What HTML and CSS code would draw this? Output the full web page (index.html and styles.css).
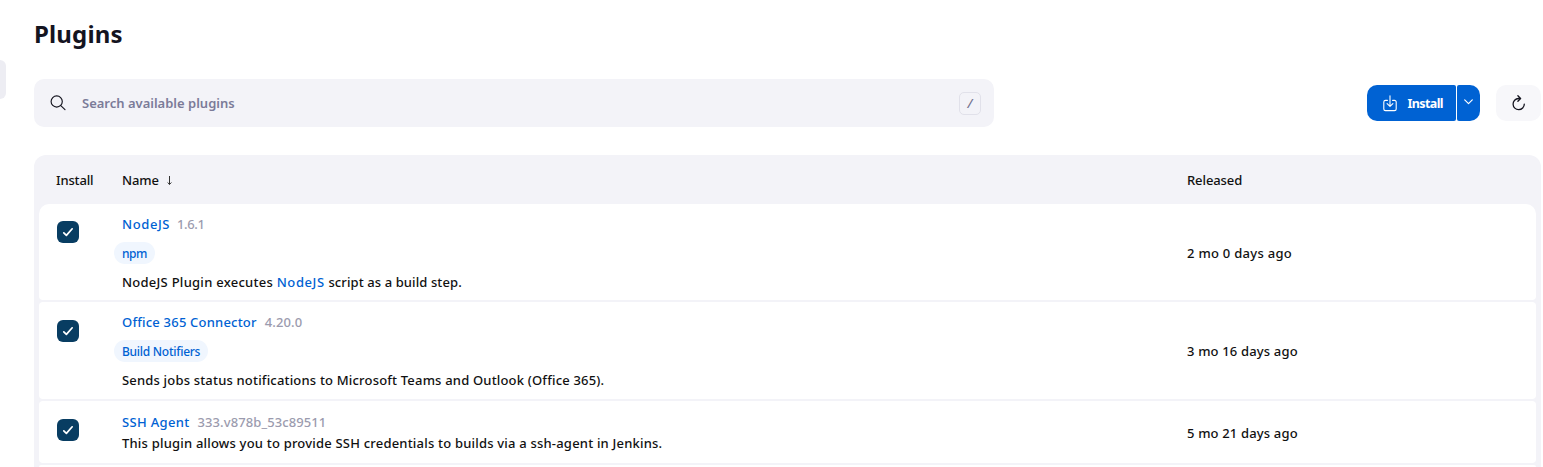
FILE: index.html
```html
<!DOCTYPE html>
<html lang="en">
<head>
<meta charset="utf-8">
<title>Plugins</title>
<link rel="stylesheet" href="styles.css">
</head>
<body>
<div class="side-item"></div>
<main class="page">
  <h1 class="title"><span>Plugins</span></h1>
  <div class="bar">
    <div class="search">
      <svg class="search-icon" width="16" height="16" viewBox="0 0 16 16" fill="none" stroke="#14141f" stroke-width="1.15" stroke-linecap="round"><circle cx="6.7" cy="6.5" r="5.6"/><path d="M10.8 10.6L15 14.6"/></svg>
      <span class="placeholder">Search available plugins</span>
      <kbd class="key">/</kbd>
    </div>
    <div class="actions">
      <button class="install">
        <svg width="14" height="17" viewBox="0 0 14 17" fill="none" stroke="#fff" stroke-width="1.1" stroke-linecap="round" stroke-linejoin="round"><path d="M4.4 5.4H2.5C1.5 5.4 .8 6 .8 7v6.900c0 1 .7 1.700 1.700 1.700h9c1 0 1.700-.7 1.700-1.700V7c0-1-.7-1.600-1.700-1.600H9.600M7 .8v10.500M4.100 8.600L7 11.400l2.900-2.800"/></svg>
        <span class="install-text">Install</span>
      </button>
      <button class="more"><svg width="9" height="6" viewBox="0 0 9 6" fill="none" stroke="#fff" stroke-width="1.200" stroke-linecap="round" stroke-linejoin="round"><path d="M.7 .8L4.500 4.600L8.300 .8"/></svg></button>
      <button class="refresh"><svg width="14" height="16" viewBox="0 0 14 16" fill="none" stroke="#14141f" stroke-width="1.300" stroke-linecap="round" stroke-linejoin="round"><path d="M8.500 3.500H6.500A5.600 5.600 0 1 0 12.300 9.100M5.900 .8L8.600 3.500L5.900 6.300"/></svg></button>
    </div>
  </div>
  <section class="table">
    <div class="head">
      <span class="h-install">Install</span>
      <span class="h-name">Name</span>
      <svg class="arrow" width="6" height="10" viewBox="0 0 6 10" fill="none" stroke="#333" stroke-width="1"><path d="M2.500 1V9.500M.6 7.500L2.500 9.400L4.400 7.500"/></svg>
      <span class="h-released">Released</span>
    </div>
    <div class="row first">
      <span class="check"><svg width="22" height="22" viewBox="0 0 22 22" fill="none" stroke="#fff" stroke-width="1.700" stroke-linecap="round" stroke-linejoin="round"><path d="M6.800 11.800L9.400 14.400L15.200 7.800"/></svg></span>
      <div class="info">
        <div class="line"><a class="link n1">NodeJS</a><span class="version v1">1.6.1</span></div>
        <div class="tag t1"><span>npm</span></div>
        <div class="line"><span class="d1">NodeJS Plugin executes <a class="link n1">NodeJS</a> <span class="d1-end">script as a build step.</span></span></div>
      </div>
      <div class="date"><span>2 mo 0 days ago</span></div>
    </div>
    <div class="row second">
      <span class="check"><svg width="22" height="22" viewBox="0 0 22 22" fill="none" stroke="#fff" stroke-width="1.700" stroke-linecap="round" stroke-linejoin="round"><path d="M6.800 11.800L9.400 14.400L15.200 7.800"/></svg></span>
      <div class="info">
        <div class="line"><a class="link n2">Office 365 Connector</a><span class="version v2">4.20.0</span></div>
        <div class="tag t2"><span>Build Notifiers</span></div>
        <div class="line"><span class="d2">Sends jobs status notifications to Microsoft Teams and Outlook (Office 365).</span></div>
      </div>
      <div class="date"><span>3 mo 16 days ago</span></div>
    </div>
    <div class="row third">
      <span class="check"><svg width="22" height="22" viewBox="0 0 22 22" fill="none" stroke="#fff" stroke-width="1.700" stroke-linecap="round" stroke-linejoin="round"><path d="M6.800 11.800L9.400 14.400L15.200 7.800"/></svg></span>
      <div class="info">
        <div class="line"><a class="link n3">SSH Agent</a><span class="version v3">333.v878b_53c89511</span></div>
        <div class="line"><span class="d3">This plugin allows you to provide SSH credentials to builds via a ssh-agent in Jenkins.</span></div>
      </div>
      <div class="date"><span>5 mo 21 days ago</span></div>
    </div>
    <div class="row next"></div>
  </section>
</main>
</body>
</html>
```

FILE: styles.css
```css
* { box-sizing: border-box; }
body {
  margin: 0;
  height: 467px;
  overflow: hidden;
  display: flex;
  background: #fff;
  color: #14141f;
  font: 500 13px/20px "Noto Sans", "Open Sans", sans-serif;
  white-space: nowrap;
}
.side-item {
  width: 6px;
  height: 39px;
  margin-top: 60px;
  background: #ededf3;
  border-radius: 0 9px 9px 0;
}
.page { width: 1507px; margin-left: 28px; }
.title { margin: 0; padding-top: 18px; height: 79px; font-size: 24px; line-height: 32px; font-weight: 700; letter-spacing: .15px; }
.bar { display: flex; justify-content: space-between; height: 48px; }
.search {
  display: flex;
  align-items: center;
  width: 960px;
  padding: 0 13px 0 16px;
  background: #f3f3f8;
  border-radius: 10px;
}
.placeholder { margin-left: 16px; flex: 1; color: #7b7b98; font-weight: 600; }
.key {
  width: 22px;
  height: 23px;
  border: 1px solid #e1e1ea;
  border-radius: 5px;
  text-align: center;
  font: italic 500 13px/21px "Noto Sans", sans-serif;
  color: #737390;
}
.actions { display: flex; padding-top: 6px; }
button { display: flex; align-items: center; height: 36px; border: 0; padding: 0; font: inherit; }
.install { width: 89px; padding-left: 16px; gap: 10px; background: #0062d3; color: #fff; font-size: 12.5px; font-weight: 700; letter-spacing: -.6px; border-radius: 10px 2px 2px 10px; }
.install-text { padding: 1px 0 0 .5px; }
.more { width: 23px; margin-left: 1px; padding: 0 0 2px 7px; background: #0062d3; border-radius: 2px 10px 10px 2px; }
.refresh { width: 45px; margin-left: 16px; justify-content: center; background: #f7f7fa; border-radius: 10px; }
.table { margin-top: 28px; height: 312px; padding: 0 5px; background: #f3f3f8; border-radius: 12px 12px 0 0; color: #111; }
.head { display: flex; align-items: center; height: 49px; padding-left: 17px; }
.h-install { width: 37px; letter-spacing: -.15px; }
.h-name { width: 37px; margin-left: 29px; letter-spacing: -.1px; }
.arrow { margin-left: 8px; }
.h-released { margin-left: 1014px; letter-spacing: -.1px; }
.row { display: flex; margin-bottom: 2px; background: #fff; border-radius: 4px; }
.first { height: 96px; border-radius: 10px 10px 4px 4px; }
.second { height: 97px; }
.third { height: 62px; }
.next { height: 2px; margin-bottom: 0; border-radius: 4px 4px 0 0; }
.check { width: 22px; height: 22px; margin: 18px 0 0 18px; border-radius: 6px; background: #083d62; }
.first .check { margin-top: 17px; }
.check svg { display: block; }
.info { width: 1065px; margin-left: 43px; padding-top: 10px; }
.third .info { padding-top: 11px; }
.line { display: flex; height: 20px; }
.third .line + .line { margin-top: 1px; }
.link { color: #0062d3; }
.n1 { letter-spacing: .6px; }
.n2 { letter-spacing: .2px; }
.n3 { letter-spacing: .32px; }
.d1 { letter-spacing: .26px; }
.d1-end { letter-spacing: .1px; }
.d2 { letter-spacing: .18px; }
.d3 { letter-spacing: .2px; }
.version { margin-left: 8px; color: #9b9bae; }
.v1 { margin-left: 7px; letter-spacing: -.4px; }
.v2 { letter-spacing: .15px; }
.v3 { letter-spacing: .1px; }
.tag {
  width: 41px;
  height: 22px;
  margin: 8px 0 8px -8px;
  padding-left: 8px;
  border-radius: 11px;
  background: #f0f6fe;
  color: #0062d3;
  font-size: 12px;
  line-height: 23px;
  letter-spacing: -.27px;
}
.t1 { letter-spacing: -.5px; line-height: 24px; }
.t2 { width: 94px; }
.date { display: flex; align-items: center; padding-top: 2px; letter-spacing: .16px; }
.first .date { letter-spacing: .28px; }
.second .date { padding-top: 0; }
```
